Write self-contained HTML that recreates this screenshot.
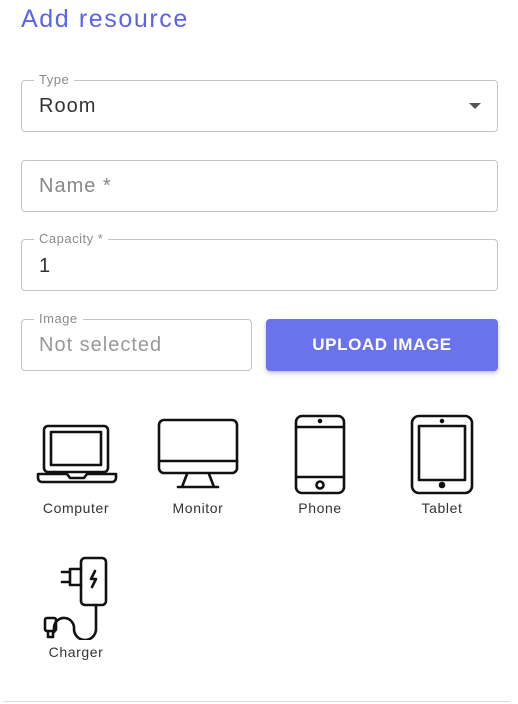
<!DOCTYPE html>
<html><head><style>
body{margin:0;width:518px;height:704px;background:#fff;font-family:"Liberation Sans",sans-serif;position:relative;overflow:hidden}
.a{position:absolute}
.box{position:absolute;border:1px solid #c4c4c4;border-radius:4px;box-sizing:border-box}
.lbl{position:absolute;top:-9px;left:12px;background:#fff;padding:0 5px;font-size:13px;color:#8a8a8a;letter-spacing:.5px}
.val{position:absolute;left:17px;font-size:20px;color:#333;letter-spacing:1px}
.cap{position:absolute;font-size:14px;color:#333;text-align:center;width:100px;letter-spacing:.6px}
svg{position:absolute;fill:none;stroke:#111;stroke-width:2.6;stroke-linejoin:round;stroke-linecap:round}
</style></head><body>
<div class="a" style="left:21px;top:5px;font-size:25px;color:#5b63ea;letter-spacing:1.6px">Add resource</div>
<div class="box" style="left:21px;top:80px;width:477px;height:52px"><span class="lbl">Type</span><span class="val" style="top:14px">Room</span>
<div class="a" style="right:16px;top:22px;width:0;height:0;border-left:6px solid transparent;border-right:6px solid transparent;border-top:6px solid #555"></div></div>
<div class="box" style="left:21px;top:160px;width:477px;height:52px"><span class="val" style="top:14px;color:#888">Name *</span></div>
<div class="box" style="left:21px;top:239px;width:477px;height:52px"><span class="lbl">Capacity *</span><span class="val" style="top:15px">1</span></div>
<div class="box" style="left:21px;top:319px;width:231px;height:52px"><span class="lbl">Image</span><span class="val" style="top:14px;color:#999">Not selected</span></div>
<div class="a" style="left:266px;top:319px;width:232px;height:52px;background:#6b73ec;border-radius:4px;box-shadow:0 2px 4px rgba(0,0,0,.25);color:#fff;font-weight:bold;font-size:17px;letter-spacing:.6px;text-align:center;line-height:52px">UPLOAD IMAGE</div>
<svg style="left:36px;top:424px" width="82" height="62" viewBox="0 0 82 62"><rect x="8" y="2" width="64" height="46" rx="4"/><rect x="15" y="8" width="50" height="33"/><path d="M2 50h29l3 4h14l3-4h29v4a4 4 0 0 1-4 4H6a4 4 0 0 1-4-4z"/></svg>
<svg style="left:157px;top:418px" width="82" height="72" viewBox="0 0 82 72"><rect x="2" y="2" width="78" height="53" rx="5"/><path d="M2 43h78M30 56l-5 13h32l-5-13M21 69h40"/></svg>
<svg style="left:294px;top:414px" width="52" height="81" viewBox="0 0 52 81"><rect x="2" y="2" width="48" height="77" rx="6"/><path d="M2 13h48M2 63h48"/><circle cx="26" cy="71" r="3.5"/><circle cx="26" cy="7" r="1" fill="#111"/></svg>
<svg style="left:410px;top:414px" width="64" height="81" viewBox="0 0 64 81"><rect x="2" y="2" width="60" height="77" rx="7"/><rect x="9" y="12" width="46" height="54"/><circle cx="32" cy="71" r="2" fill="#111"/><circle cx="32" cy="7" r="1" fill="#111"/></svg>
<div class="cap" style="left:26px;top:500px">Computer</div>
<div class="cap" style="left:148px;top:500px">Monitor</div>
<div class="cap" style="left:270px;top:500px">Phone</div>
<div class="cap" style="left:392px;top:500px">Tablet</div>
<svg style="left:42px;top:556px" width="68" height="84" viewBox="0 0 68 84"><rect x="39" y="2" width="25" height="47" rx="4"/><path d="M39 13H28v16h11M20 16h8M20 26h8M53 15l-4 8h5l-4 8"/><path d="M54 49v24a11 11 0 0 1-22 0a10 10 0 0 0-20-2v5"/><rect x="3" y="62" width="11" height="13" rx="2"/><path d="M6 75v6h5v-6"/></svg>
<div class="cap" style="left:26px;top:644px">Charger</div>
<div class="a" style="left:3px;top:701px;width:507px;height:1px;background:#ddd"></div>
</body></html>
